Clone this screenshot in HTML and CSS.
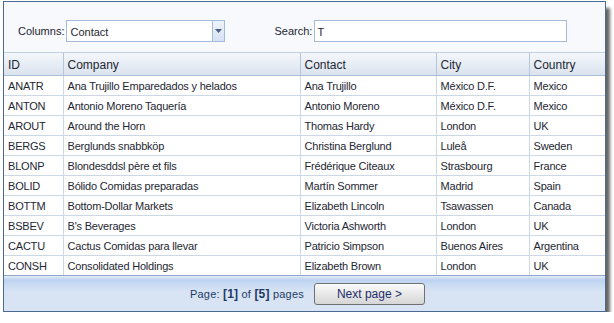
FILE: index.html
```html
<!DOCTYPE html>
<html>
<head>
<meta charset="utf-8">
<link rel="stylesheet" href="styles.css">
</head>
<body>
<div class="grid-frame">
  <div class="toolbar">
    <label class="tb-label">Columns:</label>
    <div class="select">
      <span class="select-text">Contact</span>
      <span class="select-btn"><svg width="7" height="4" viewBox="0 0 7 4"><path d="M0 0H7L3.5 4Z" fill="#4d6185"/></svg></span>
    </div>
    <label class="tb-label search-label">Search:</label>
    <div class="search-box"><span class="search-text">T</span></div>
  </div>
  <table class="grid">
    <colgroup>
      <col class="c-id"><col class="c-company"><col class="c-contact"><col class="c-city"><col class="c-country">
    </colgroup>
    <thead>
      <tr><th>ID</th><th>Company</th><th>Contact</th><th>City</th><th>Country</th></tr>
    </thead>
    <tbody>
      <tr><td>ANATR</td><td>Ana Trujillo Emparedados y helados</td><td>Ana Trujillo</td><td>México D.F.</td><td>Mexico</td></tr>
      <tr><td>ANTON</td><td>Antonio Moreno Taquería</td><td>Antonio Moreno</td><td>México D.F.</td><td>Mexico</td></tr>
      <tr><td>AROUT</td><td>Around the Horn</td><td>Thomas Hardy</td><td>London</td><td>UK</td></tr>
      <tr><td>BERGS</td><td>Berglunds snabbköp</td><td>Christina Berglund</td><td>Luleå</td><td>Sweden</td></tr>
      <tr><td>BLONP</td><td>Blondesddsl père et fils</td><td>Frédérique Citeaux</td><td>Strasbourg</td><td>France</td></tr>
      <tr><td>BOLID</td><td>Bólido Comidas preparadas</td><td>Martín Sommer</td><td>Madrid</td><td>Spain</td></tr>
      <tr><td>BOTTM</td><td>Bottom-Dollar Markets</td><td>Elizabeth Lincoln</td><td>Tsawassen</td><td>Canada</td></tr>
      <tr><td>BSBEV</td><td>B's Beverages</td><td>Victoria Ashworth</td><td>London</td><td>UK</td></tr>
      <tr><td>CACTU</td><td>Cactus Comidas para llevar</td><td>Patricio Simpson</td><td>Buenos Aires</td><td>Argentina</td></tr>
      <tr><td>CONSH</td><td>Consolidated Holdings</td><td>Elizabeth Brown</td><td>London</td><td>UK</td></tr>
    </tbody>
  </table>
  <div class="pager">
    <span class="pager-text">Page: <b>[1]</b> of <b>[5]</b> pages</span>
    <button class="next-btn">Next page &gt;</button>
  </div>
</div>
</body>
</html>
```

FILE: styles.css
```css
html, body {
  margin: 0;
  padding: 0;
  background: #fff;
}
body {
  font-family: "Liberation Sans", Arial, sans-serif;
  font-size: 11px;
  color: #1e2733;
}
.grid-frame {
  margin: 1px 0 0 3px;
  width: 603px;
  box-sizing: border-box;
  border: 1px solid #4b6a92;
  background: #fff;
  box-shadow: 5px 6px 3px -1px rgba(0,0,0,0.6);
}
.toolbar {
  height: 51px;
  box-sizing: border-box;
  background: #f7f9fc;
  border-bottom: 1px solid #c0cfe0;
  display: flex;
  align-items: center;
  padding: 7px 0 0 14px;
}
.tb-label {
  color: #1e2733;
  margin-right: 2px;
  padding-top: 1px;
}
.select {
  width: 159px;
  height: 22px;
  box-sizing: border-box;
  border: 1px solid #a4bcd8;
  background: #fff;
  display: flex;
  align-items: center;
}
.select-text {
  flex: 1;
  padding-left: 3px;
  padding-top: 2px;
}
.select-btn {
  width: 11px;
  height: 20px;
  border-left: 1px solid #a4bcd8;
  background: linear-gradient(#eef3fa, #d5e2f3);
  display: flex;
  align-items: center;
  justify-content: center;
}
.search-label {
  margin-left: 49px;
}
.search-box {
  width: 253px;
  height: 22px;
  box-sizing: border-box;
  border: 1px solid #a4bcd8;
  background: #fff;
  display: flex;
  align-items: center;
  padding-left: 2px;
  padding-top: 2px;
}
.search-text {
  color: #1e2733;
}
.grid {
  width: 100%;
  border-collapse: collapse;
  table-layout: fixed;
  letter-spacing: -0.2px;
}
.c-id { width: 59px; }
.c-company { width: 237px; }
.c-contact { width: 136px; }
.c-city { width: 93px; }
.c-country { width: auto; }
.grid th {
  height: 22px;
  box-sizing: border-box;
  text-align: left;
  font-weight: normal;
  font-size: 12px;
  letter-spacing: 0;
  color: #1e2733;
  padding: 2px 0 0 4px;
  background: linear-gradient(#f4f7fb, #dae3ee);
  border-left: 1px solid #b4c6dc;
  border-bottom: 1px solid #a9bdd6;
}
.grid th:first-child, .grid td:first-child { border-left: none; }
.grid td {
  height: 20px;
  box-sizing: border-box;
  padding: 1px 0 0 4px;
  border-left: 1px solid #cdd8e6;
  border-bottom: 1px solid #cdd8e6;
  white-space: nowrap;
  overflow: hidden;
}
.grid tbody tr:last-child td {
  border-bottom: 1px solid #8fa8c8;
}
.pager {
  height: 35px;
  box-sizing: border-box;
  background: linear-gradient(#e3ecf8 0px, #bcd2f1 4px, #cadcf3 9px, #d8e4f4 16px, #d8e4f4 100%);
  display: flex;
  align-items: center;
  padding: 1px 0 0 186px;
}
.pager-text {
  color: #1e3a64;
  margin-right: 10px;
  letter-spacing: 0.2px;
}
.pager-text b {
  font-weight: bold;
  font-size: 12px;
}
.next-btn {
  width: 111px;
  height: 22px;
  box-sizing: border-box;
  font-family: "Liberation Sans", Arial, sans-serif;
  font-size: 12px;
  color: #1e2e6b;
  background: linear-gradient(#fbfbfb, #e6e6e6 55%, #d6d6d6);
  border: 1px solid #707070;
  border-radius: 3px;
  padding: 0;
}
```
